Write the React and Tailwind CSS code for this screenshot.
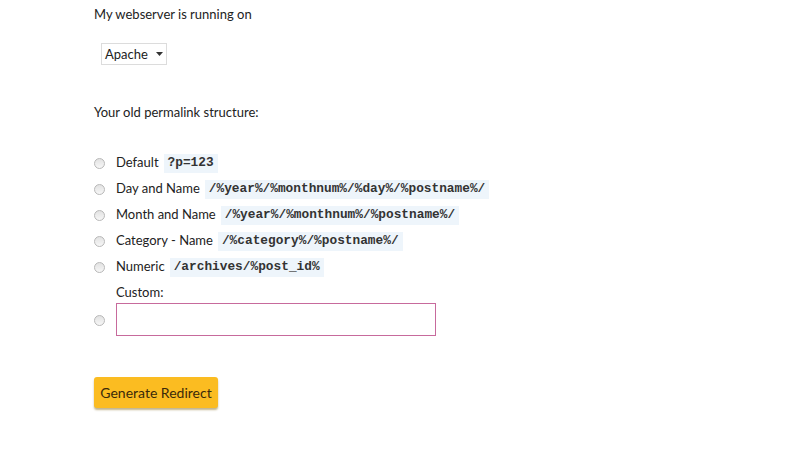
const options = [
  { label: 'Default', code: '?p=123' },
  { label: 'Day and Name', code: '/%year%/%monthnum%/%day%/%postname%/' },
  { label: 'Month and Name', code: '/%year%/%monthnum%/%postname%/' },
  { label: 'Category - Name', code: '/%category%/%postname%/' },
  { label: 'Numeric', code: '/archives/%post_id%' },
]

function Radio() {
  return (
    <span className="block w-[11px] h-[11px] rounded-full border border-[#b8b8b8] bg-gradient-to-b from-[#e2e2e2] to-[#f7f7f7] shrink-0" />
  )
}

export default function App() {
  return (
    <div className="w-[803px] h-[450px] bg-white text-[#222] text-[13px] font-['Lato',sans-serif] pl-[94px] pt-[5px]">
      <p className="leading-[18px]">My webserver is running on</p>

      <div className="mt-[20px] ml-[7px] inline-flex items-center gap-[8px] h-[22px] px-[3px] border border-[#dcdcdc] bg-white">
        <span className="leading-none text-[13px]">Apache</span>
        <svg width="7" height="4" viewBox="0 0 7 4"><path d="M0 0h7L3.5 4z" fill="#333" /></svg>
      </div>

      <p className="mt-[38px] leading-[18px]">Your old permalink structure:</p>

      <div className="mt-[32px] flex flex-col gap-[6px]">
        {options.map((o) => (
          <div key={o.label} className="flex items-center h-[20px]">
            <span className="mr-[11px]"><Radio /></span>
            <span className="mr-[5px]">{o.label}</span>
            <code className="bg-[#eef5fb] px-[4px] h-[19px] flex items-center text-[12.8px] font-bold font-['Liberation_Mono',monospace] text-[#333]">{o.code}</code>
          </div>
        ))}
      </div>

      <div className="mt-[6px] flex items-end">
        <span className="mb-[10px] mr-[11px]"><Radio /></span>
        <div className="flex flex-col">
          <span className="leading-[18px] mb-[2px]">Custom:</span>
          <div className="w-[320px] h-[33px] border border-[#c76a9c]" />
        </div>
      </div>

      <button className="mt-[41px] h-[31px] w-[124px] rounded-[3px] bg-[#fbbc21] text-[#3a2a0a] text-[14px] shadow-[0_2px_2px_rgba(120,90,0,0.45)] leading-none">
        Generate Redirect
      </button>
    </div>
  )
}
